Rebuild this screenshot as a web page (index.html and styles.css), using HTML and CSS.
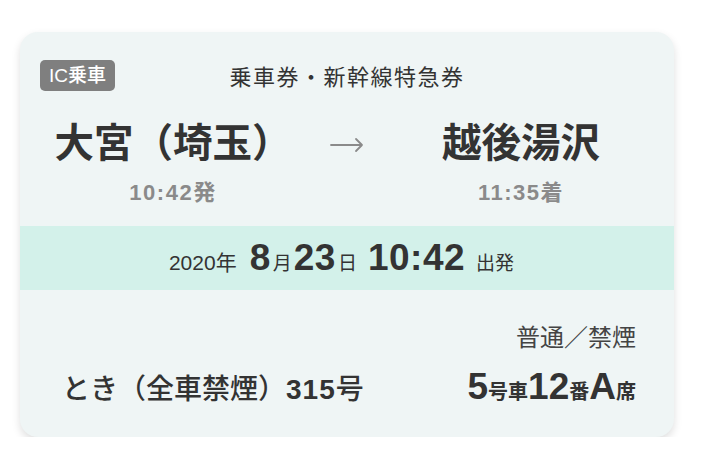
FILE: index.html
```html
<!DOCTYPE html>
<html lang="ja">
<head>
<meta charset="utf-8">
<link rel="stylesheet" href="styles.css">
</head>
<body>
<div class="card">
  <div class="head">
    <span class="badge">IC乗車</span>
    <span class="title">乗車券・新幹線特急券</span>
    <span></span>
  </div>
  <div class="route">
    <div class="stop">
      <div class="name">大宮（埼玉）</div>
      <div class="time">10:42発</div>
    </div>
    <div class="arrow">
      <svg width="34" height="16" viewBox="0 0 34 16"><path d="M1 8H32M26 2L32 8L26 14" fill="none" stroke="#8a8a8a" stroke-width="1.8" stroke-linecap="round" stroke-linejoin="round"/></svg>
    </div>
    <div class="stop">
      <div class="name">越後湯沢</div>
      <div class="time">11:35着</div>
    </div>
  </div>
  <div class="band">
    <span class="yr">2020年</span>
    <span class="big">8</span><span class="sm">月</span><span class="big">23</span><span class="sm">日</span>
    <span class="big">10:42</span>
    <span class="sm">出発</span>
  </div>
  <div class="seat-type">普通／禁煙</div>
  <div class="bottom">
    <div class="train">とき（全車禁煙）<span class="num">315</span>号</div>
    <div class="seat"><span class="big">5</span><span class="sm">号車</span><span class="big">12</span><span class="sm">番</span><span class="big">A</span><span class="sm">席</span></div>
  </div>
</div>
</body>
</html>
```

FILE: styles.css
```css
* { box-sizing: border-box; }
body {
  margin: 0;
  background: #ffffff;
  font-family: "Liberation Sans", "Noto Sans CJK JP", sans-serif;
  color: #333333;
}
.card {
  margin: 32px 0 0 20px;
  width: 654px;
  height: 405px;
  border-radius: 18px;
  background: #eff5f5;
  box-shadow: 0 4px 8px rgba(0, 0, 0, 0.13);
  overflow: hidden;
  padding-top: 26px;
}
.head {
  display: grid;
  grid-template-columns: 1fr auto 1fr;
  align-items: center;
  height: 31px;
}
.badge {
  justify-self: start;
  margin-left: 20px;
  height: 31px;
  width: 75px;
  border-radius: 5px;
  background: #7f7f7f;
  color: #ffffff;
  font-family: "Liberation Sans", "Noto Sans CJK JP Medium", "Noto Sans CJK JP", sans-serif;
  font-size: 19px;
  font-weight: 400;
  line-height: 31px;
  text-align: center;
}
.title {
  font-size: 22px;
  line-height: 31px;
  letter-spacing: 1.5px;
  color: #333333;
  margin-top: 4px;
}
.route {
  display: grid;
  grid-template-columns: 1fr 42px 1fr;
  margin-top: 31px;
}
.stop {
  display: flex;
  flex-direction: column;
  align-items: center;
}
.name {
  font-size: 39.5px;
  font-weight: 700;
  line-height: 46px;
  color: #333333;
}
.time {
  margin-top: 14px;
  font-size: 22px;
  font-weight: 700;
  line-height: 26px;
  letter-spacing: 1.5px;
  color: #8a8a8a;
}
.arrow {
  display: flex;
  justify-content: center;
  padding-top: 17px;
}
.band {
  margin-top: 20px;
  height: 64px;
  background: #d3f1ea;
  display: flex;
  justify-content: center;
  align-items: baseline;
  padding-top: 12px;
  line-height: 40px;
}
.band .yr { font-size: 21px; margin-right: 13px; }
.band .big { font-size: 37px; font-weight: 700; letter-spacing: 0.5px; }
.band .sm { font-size: 19px; margin: 0 2px; }
.band .big + .sm + .big + .sm { margin-right: 11px; }
.band .sm:last-child { margin-left: 11px; }
.seat-type {
  margin-top: 33px;
  padding-right: 38px;
  text-align: right;
  font-size: 24px;
  line-height: 30px;
  color: #444444;
}
.bottom {
  display: flex;
  justify-content: space-between;
  align-items: baseline;
  padding: 0 38px 0 42px;
  margin-top: 14px;
  line-height: 40px;
}
.train {
  font-family: "Noto Sans CJK JP Medium", "Noto Sans CJK JP", sans-serif;
  font-size: 28px;
  font-weight: 400;
  color: #333333;
}
.train .num {
  font-family: "Liberation Sans", sans-serif;
  font-weight: 700;
  letter-spacing: 1px;
}
.seat .big { font-size: 37px; font-weight: 700; }
.seat .sm { font-size: 20px; font-weight: 600; }
```
